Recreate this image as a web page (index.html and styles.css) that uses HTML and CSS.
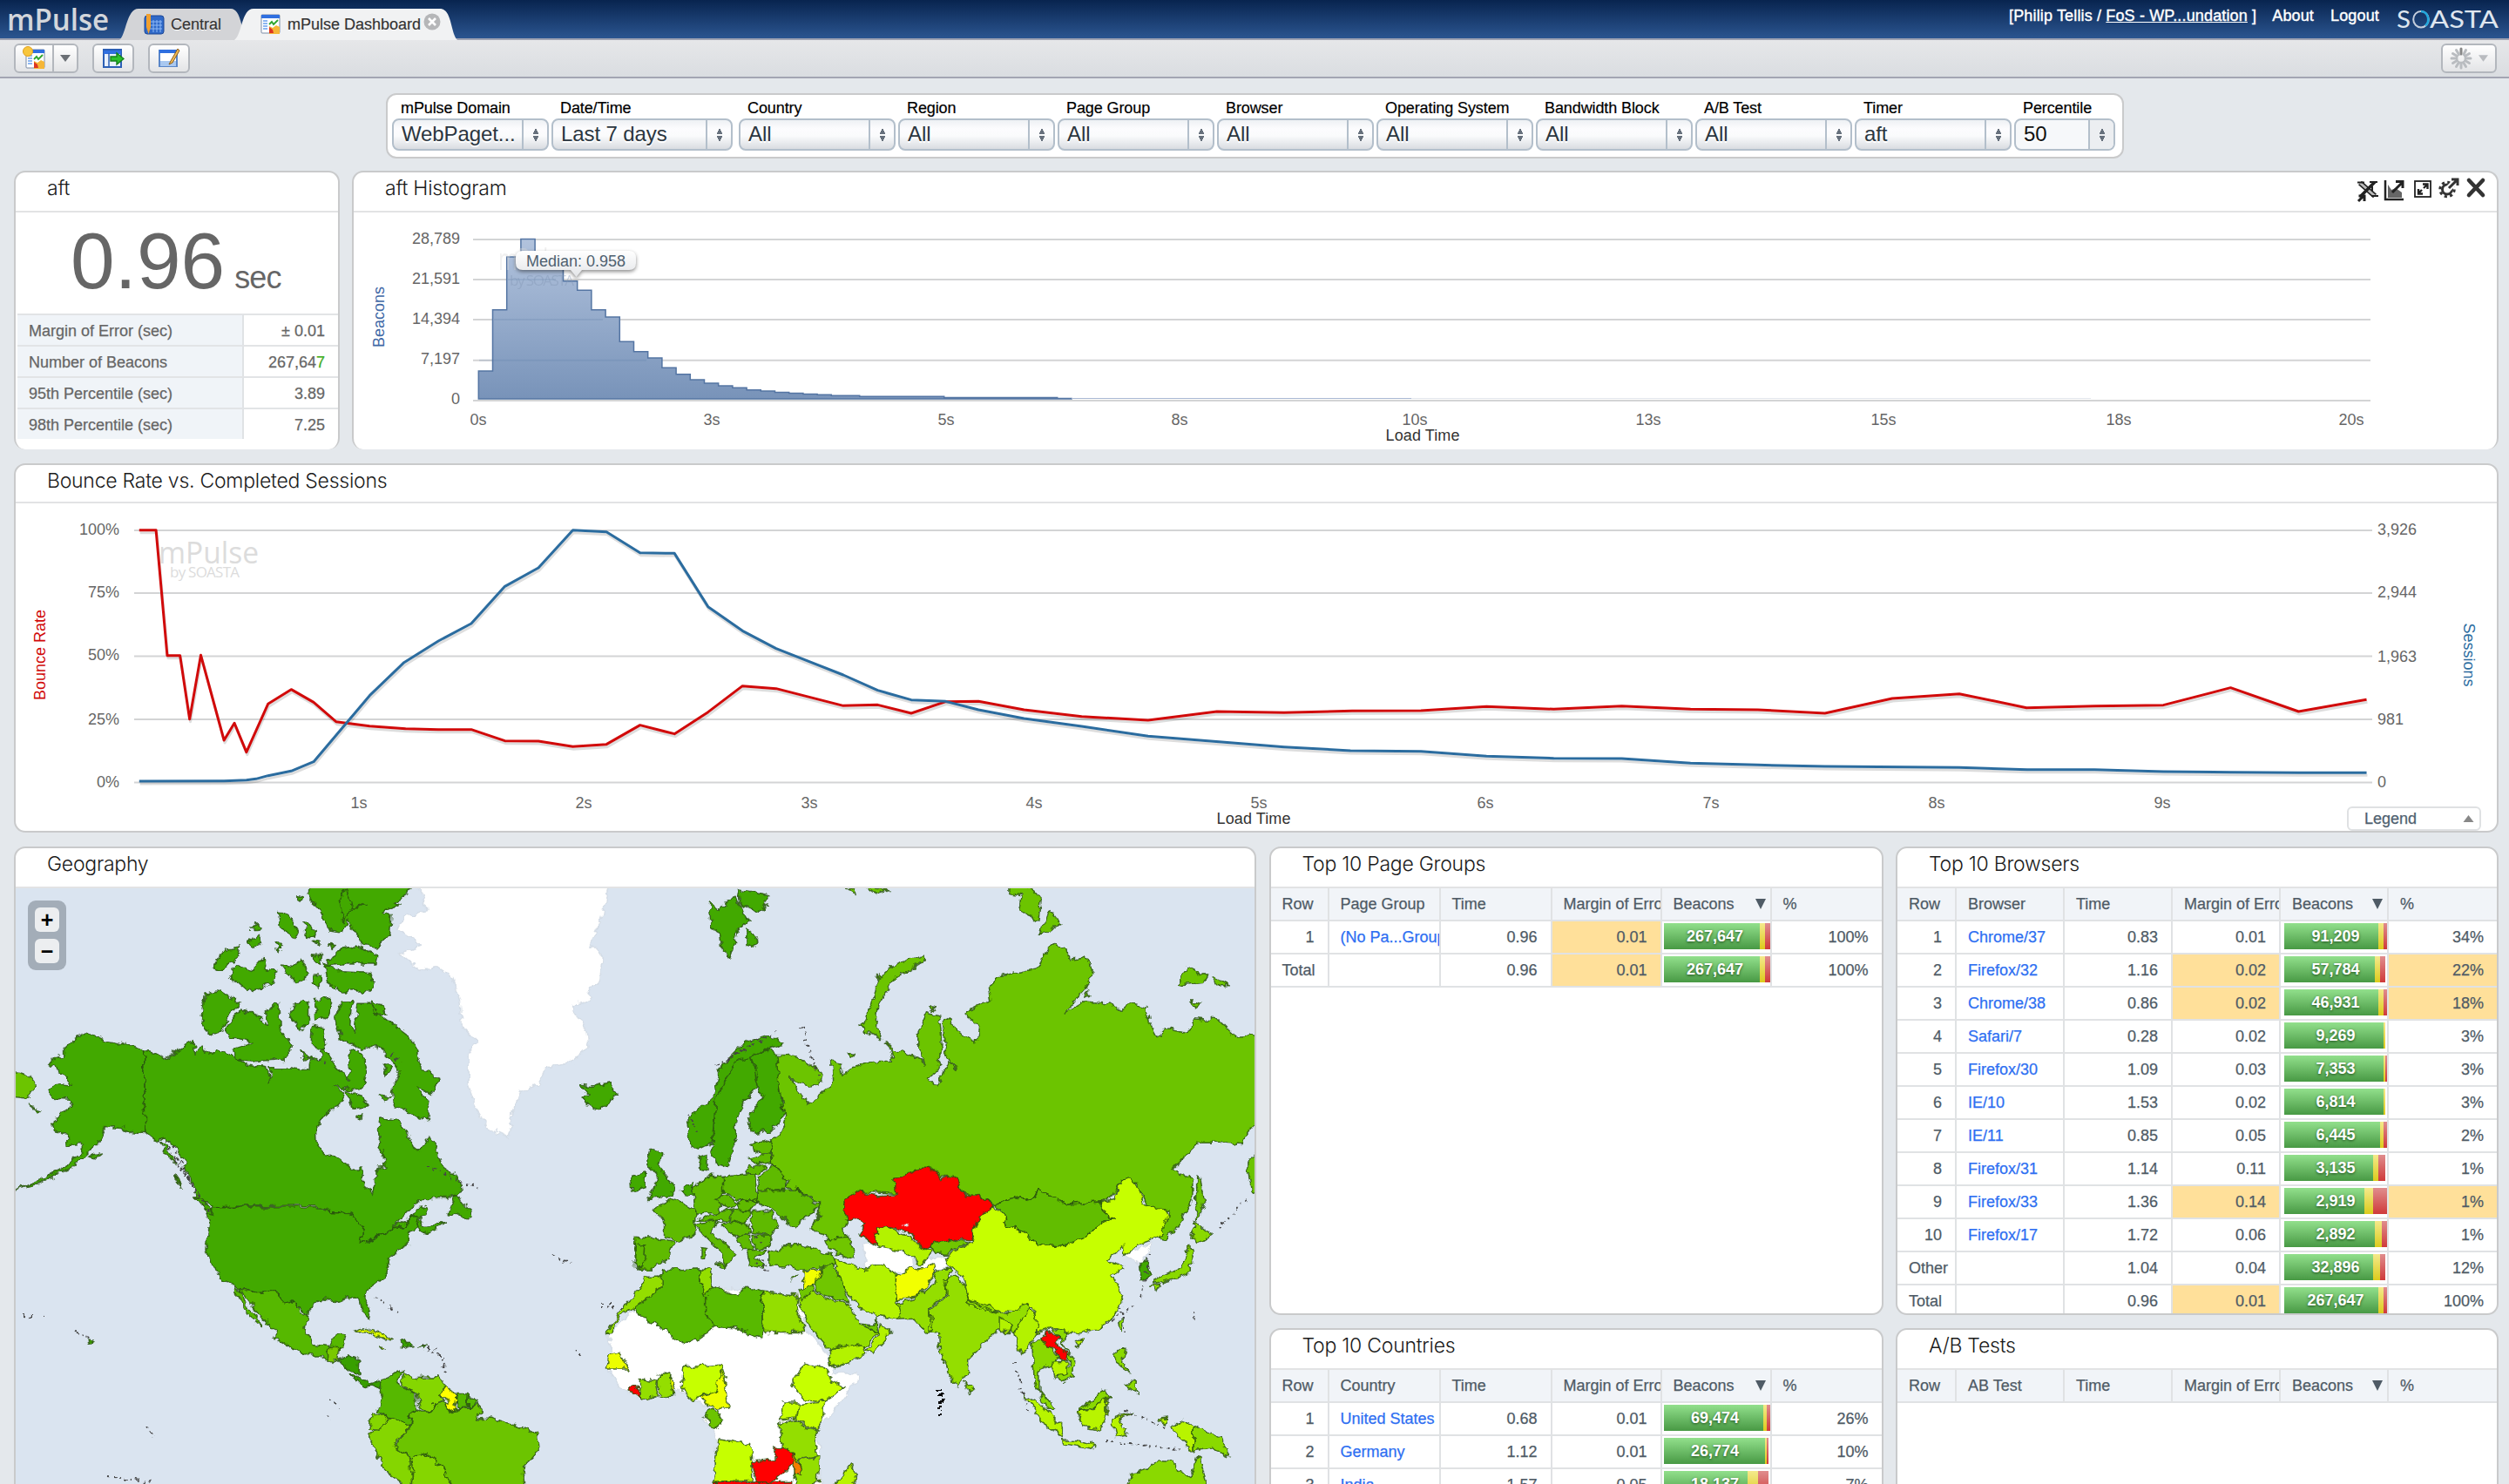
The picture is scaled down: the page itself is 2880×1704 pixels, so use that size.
FILE: index.html
```html
<!DOCTYPE html>
<html lang="en">
<head>
<meta charset="utf-8">
<title>mPulse Dashboard</title>
<link rel="stylesheet" href="styles.css">
</head>
<body>
<header class="topbar">
  <svg class="brand" width="136" height="44" viewBox="0 0 136 44"><text x="8" y="35" textLength="117" lengthAdjust="spacingAndGlyphs">mPulse</text></svg>
  <nav class="tabs">
    <div class="tab tab-central">
      <svg class="tab-shape" width="146" height="36" viewBox="0 0 146 36"><path d="M0 36C8 30 8 0 22 0H128C140 0 140 26 146 36Z" fill="#d3d4d7"/></svg>
      <svg class="tab-icon" width="24" height="26" viewBox="0 0 24 26"><rect x="1" y="3" width="22" height="21" rx="3" fill="#2f69c8" stroke="#1d4795"/><path d="M7 10H21M7 14H21M7 18H21M11 8V22M15 8V22M19 8V22" stroke="#8db8f5"/><path d="M3 1H8V16L5.500 24L3 16Z" fill="#f0a030"/></svg>
      <span class="tab-label">Central</span>
    </div>
    <div class="tab tab-active">
      <svg class="tab-shape" width="256" height="36" viewBox="0 0 256 36"><path d="M0 36C9 30 8 0 22 0H236C250 0 248 28 256 36Z" fill="#f1f2f3"/></svg>
      <svg class="tab-icon" width="24" height="24" viewBox="0 0 24 24"><use href="#dash"/></svg>
      <span class="tab-label">mPulse Dashboard</span>
      <svg class="tab-close" width="20" height="20" viewBox="0 0 20 20"><circle cx="10" cy="10" r="9.500" fill="#b5b6b8"/><path d="M6 6L14 14M14 6L6 14" stroke="#fff" stroke-width="2.600"/></svg>
    </div>
  </nav>
  <div class="account">
    <span class="who">[Philip Tellis / <u>FoS - WP...undation</u> ]</span>
    <span class="about">About</span>
    <span class="logout">Logout</span>
    <svg width="120" height="44" viewBox="0 0 120 44" class="soasta"><text x="1" y="32" textLength="16" lengthAdjust="spacingAndGlyphs">S</text><text x="39" y="32" textLength="79" lengthAdjust="spacingAndGlyphs">ASTA</text><ellipse cx="29" cy="22.200" rx="8.800" ry="9.300" fill="none" stroke="#c4cedd" stroke-width="2"/><path d="M29 13A8.800 9.300 0 0 1 34 29.500" fill="none" stroke="#22a7dc" stroke-width="2.600"/></svg>
  </div>
</header>
<svg class="defs" width="0" height="0"><defs>
  <g id="dash"><rect x="1" y="1" width="21" height="21" rx="1" fill="#fff" stroke="#7a8ba5"/><rect x="1" y="1" width="21" height="4" fill="#2f6fe0"/><path d="M3 8H8M3 11H8M3 14H8M3 17H8" stroke="#68a0ee" stroke-width="1.600"/><path d="M10 12L13 9L15 12L20 7" fill="none" stroke="#2da52d" stroke-width="1.800"/><path d="M10 14L14 16L18 13L22 15V23H10Z" fill="#f5b637"/><path d="M10 15L14 18L15 22H10Z" fill="#dd3522"/></g>
</defs></svg>
<div class="toolbar">
  <div class="btn btn-split"><span class="half"><svg width="30" height="28" viewBox="0 0 30 28"><use href="#dash" x="5" y="4"/><circle cx="8" cy="7" r="5.500" fill="#f8c63c" stroke="#dfa020"/></svg></span><span class="drop"><svg width="12" height="8" viewBox="0 0 12 8"><path d="M0 0H12L6 8Z" fill="#6b6f75"/></svg></span></div>
  <div class="btn"><svg width="26" height="24" viewBox="0 0 26 24"><rect x="2" y="2" width="20" height="20" fill="#e9f1fd" stroke="#2c5fb5" stroke-width="2"/><path d="M2 5H22" stroke="#2f6fe0" stroke-width="4"/><path d="M8 6V22" stroke="#2c5fb5" stroke-width="1.500"/><path d="M10 10H17V6L25 12.500L17 19V15H10Z" fill="#2cc02c" stroke="#15801a" stroke-width="1.400"/></svg></div>
  <div class="btn"><svg width="26" height="24" viewBox="0 0 26 24"><rect x="2" y="3" width="20" height="18" fill="#fff" stroke="#5a86c8" stroke-width="2"/><rect x="2" y="2" width="20" height="4" fill="#2f6fe0"/><rect x="3" y="15" width="18" height="6" fill="#a9c8f0"/><path d="M23 1L15 15L13 19L17 17L25 3Z" fill="#f2bb55" stroke="#8a5c1c"/></svg></div>
  <div class="btn btn-gear"><svg width="26" height="26" viewBox="0 0 26 26" stroke="#b9bcc0" stroke-width="3" stroke-linecap="round"><path d="M13 2V8" stroke="#888"/><path d="M18.500 3.500L16 8.500M22.500 7.500L17.500 10.500M24 13H18M22.500 18.500L17.500 15.500M18.500 22.500L15.500 17.500M13 24V18M7.500 22.500L10.500 17.500M3.500 18.500L8.500 15.500M2 13H8M3.500 7.500L8.500 10.500M7.500 3.500L10.500 8.500"/></svg><svg width="11" height="8" viewBox="0 0 12 8"><path d="M0 0H12L6 8Z" fill="#b9bbbf"/></svg></div>
</div>
<main>
  <section class="filters">
    <div class="filter"><label>mPulse Domain</label><div class="select"><span>WebPaget...</span><i></i></div></div>
    <div class="filter"><label>Date/Time</label><div class="select select-date"><span>Last 7 days</span><i></i></div></div>
    <div class="filter"><label>Country</label><div class="select"><span>All</span><i></i></div></div>
    <div class="filter"><label>Region</label><div class="select"><span>All</span><i></i></div></div>
    <div class="filter"><label>Page Group</label><div class="select"><span>All</span><i></i></div></div>
    <div class="filter"><label>Browser</label><div class="select"><span>All</span><i></i></div></div>
    <div class="filter"><label>Operating System</label><div class="select"><span>All</span><i></i></div></div>
    <div class="filter"><label>Bandwidth Block</label><div class="select"><span>All</span><i></i></div></div>
    <div class="filter"><label>A/B Test</label><div class="select"><span>All</span><i></i></div></div>
    <div class="filter"><label>Timer</label><div class="select"><span>aft</span><i></i></div></div>
    <div class="filter"><label>Percentile</label><div class="select select-input"><span>50</span><i></i></div></div>
  </section>

  <div class="row-top">
    <section class="panel open-end">
      <h2>aft</h2>
      <div class="big"><b>0.96</b><span>sec</span></div>
      <dl class="stats">
        <dt>Margin of Error (sec)</dt><dd>± 0.01</dd>
        <dt>Number of Beacons</dt><dd>267,64<em>7</em></dd>
        <dt>95th Percentile (sec)</dt><dd>3.89</dd>
        <dt>98th Percentile (sec)</dt><dd>7.25</dd>
      </dl>
    </section>
    <section class="panel open-end">
      <h2 class="with-tools"><span>aft Histogram</span>
        <svg width="150" height="32" viewBox="2705 202 150 32" fill="none" stroke="#222">
          <path d="M2709 210L2726 225" stroke-width="6"/><path d="M2709 210L2726 225" stroke="#bbb" stroke-width="3"/><path d="M2726 209L2710 225" stroke-width="3.500"/><path d="M2706 209.500H2714M2720 209H2729M2723 214V220M2722 225H2730" stroke-width="2"/><path d="M2707 231L2712 226M2707.500 225H2714V231" stroke-width="3"/>
          <path d="M2738 207V229H2759" stroke-width="2.500"/><path d="M2741 227V212L2745 218L2750 216L2757 221V227Z" fill="#666" stroke="none"/><path d="M2746 221L2757 210M2750 208.500H2758V216" stroke-width="3"/>
          <rect x="2772" y="208" width="18" height="18" stroke-width="1.800"/><path d="M2776 222L2780 218M2776 217V222.500H2781M2786 212L2782 216M2781 211.500H2786.500V217" stroke-width="2.400"/>
          <circle cx="2809" cy="217.500" r="5.500" stroke="#333" stroke-width="3"/><circle cx="2809" cy="217.500" r="8.200" stroke="#333" stroke-width="3" stroke-dasharray="3.200 3.240"/><path d="M2810 217L2820 207" stroke="#fff" stroke-width="7"/><path d="M2811 216L2820 207M2814 206H2821V213" stroke="#333" stroke-width="3"/>
          <path d="M2834 207L2850 224M2850 207L2834 224" stroke="#333" stroke-width="4.600" stroke-linecap="round"/>
        </svg>
      </h2>
      <svg class="chart" viewBox="406 244 2460 272" width="2460" height="272">
        <defs><linearGradient id="hg" x1="0" y1="274" x2="0" y2="458" gradientUnits="userSpaceOnUse"><stop offset="0" stop-color="#b2c3dd"/><stop offset="1" stop-color="#7893b9"/></linearGradient>
        <linearGradient id="tg" x1="0" y1="0" x2="0" y2="1"><stop offset="0" stop-color="#fff"/><stop offset="1" stop-color="#e3e5e8"/></linearGradient></defs>
        <path class="grid" d="M543 275H2721M543 321H2721M543 367H2721M543 413.700H2721M543 460H2721"/>
        <path fill="url(#hg)" stroke="#5475a3" stroke-width="1.500" d="M549.300 458V426h16.200V355.700h16.200V295h16.200V274.500h16.200V289h16.200V305h16.200V322.700h16.200V333.300h16.200V355.700h16.200V364h16.200V392.300h16.200V403.700h16.200V411h16.200V422.300h16.200V429.700h16.200V436h16.200V440h16.200V443h16.200V445.300h16.200V447.700h16.200V449h16.200V450.600h16.200V451.600h16.200V452.600h16.200V453.300h16.200V454.300h32.400V455.300h97V456.400h130V457.400H1230V458Z"/>
        <path d="M1230 457.500H1620" stroke="#a9b8d3" stroke-width="1"/><path d="M1620 457.500H2400" stroke="#e3e6ec" stroke-width="1"/>
        <path d="M550 413.700H742M567 367H692M583 321H638" stroke="#55759f" stroke-opacity=".18" stroke-width="2"/>
        <g class="mark"><text x="572" y="310" font-size="34" textLength="82" lengthAdjust="spacingAndGlyphs" opacity=".4">mPulse</text><text x="585" y="328" font-size="17" textLength="74" fill="#8195b3" opacity=".4">by SOASTA</text></g>
        <g class="tip"><path d="M600 288H722Q730 288 730 296V302Q730 310 722 310H668L661.500 318L655 310H600Q592 310 592 302V296Q592 288 600 288Z" fill="url(#tg)"/></g><text class="tip-text" x="604" y="306" textLength="114">Median: 0.958</text>
        <g class="axis end"><text x="528" y="280">28,789</text><text x="528" y="326">21,591</text><text x="528" y="372">14,394</text><text x="528" y="418">7,197</text><text x="528" y="464">0</text></g>
        <g class="axis mid"><text x="549" y="488">0s</text><text x="817" y="488">3s</text><text x="1086" y="488">5s</text><text x="1354" y="488">8s</text><text x="1624" y="488">10s</text><text x="1892" y="488">13s</text><text x="2162" y="488">15s</text><text x="2432" y="488">18s</text><text x="2699" y="488">20s</text><text class="dark" x="1633" y="506" textLength="85">Load Time</text>
        <text class="blue" transform="translate(441 364) rotate(-90)">Beacons</text></g>
      </svg>
    </section>
  </div>

  <section class="panel bounce">
    <h2>Bounce Rate vs. Completed Sessions</h2>
    <svg class="chart" viewBox="18 578 2848 376" width="2848" height="376">
      <path class="grid" d="M154 609H2723M154 681H2723M154 753.500H2723M154 826H2723M154 898.500H2723"/>
      <g class="mark"><text x="182" y="647" font-size="34" textLength="115" lengthAdjust="spacingAndGlyphs">mPulse</text><text x="195" y="663" font-size="17" textLength="80">by SOASTA</text></g>
      <defs>
        <polyline id="sess" points="174,1011 280,1010 308,1007 320,1003 335,992 364,976 392,944 462,716 505,602 548,528 589,468 631,340 673,276 716,146 758,152 800,224 843,226 885,410 928,493 970,554 1054,645 1097,698 1139,731 1182,736 1223,765 1280,795 1352,822 1435,856 1568,885 1605,893 1688,906 1776,908 1858,925 1942,932 2027,933 2113,949 2197,955 2281,960 2449,964 2534,971 2618,971 2704,978 2788,980 2873,982 2958,982"/>
        <polyline id="rate" points="174,146 195,146 209,578 225,578 237,797 251,577 280,870 293,811 308,911 335,745 364,695 392,739 420,806 462,821 507,830 548,833 589,833 631,872 673,873 716,892 758,884 800,818 843,848 885,773 928,683 970,692 1054,751 1097,748 1139,777 1182,737 1223,736 1280,765 1352,788 1435,801 1521,771 1605,775 1690,769 1776,768 1858,754 1942,763 2027,752 2113,763 2197,765 2281,777 2365,726 2449,710 2533,758 2618,752 2704,749 2788,689 2873,771 2958,730"/>
      </defs>
      <g class="lines" transform="translate(0 560) scale(.91837 .33333)">
        <g class="shade"><use href="#rate" x="1" y="9"/><use href="#sess" x="1" y="9"/></g>
        <use href="#rate" stroke="#d10a0a"/><use href="#sess" stroke="#2b6c9f"/>
      </g>
      <g class="axis end"><text x="137" y="614">100%</text><text x="137" y="686">75%</text><text x="137" y="758">50%</text><text x="137" y="832">25%</text><text x="137" y="904">0%</text></g>
      <g class="axis"><text x="2729" y="614">3,926</text><text x="2729" y="686">2,944</text><text x="2729" y="760">1,963</text><text x="2729" y="832">981</text><text x="2729" y="904">0</text></g>
      <g class="axis mid"><text x="412" y="928">1s</text><text x="670" y="928">2s</text><text x="929" y="928">3s</text><text x="1187" y="928">4s</text><text x="1445" y="928">5s</text><text x="1705" y="928">6s</text><text x="1964" y="928">7s</text><text x="2223" y="928">8s</text><text x="2482" y="928">9s</text><text class="dark" x="1439" y="946" textLength="85">Load Time</text>
      <text class="red" transform="translate(52 752) rotate(-90)" textLength="104">Bounce Rate</text><text class="blue2" transform="translate(2828 752) rotate(90)">Sessions</text></g>
    </svg>
    <div class="legend">Legend<svg width="13" height="8" viewBox="0 0 12 8"><path d="M0 8H12L6 0Z" fill="#888"/></svg></div>
  </section>

  <div class="row-grid">
    <section class="panel geo cut">
      <h2>Geography</h2>
      <div class="mapwrap">
      <svg class="map" viewBox="18 1020 1422 684" width="1422" height="684">
        <defs><filter id="coast" x="0" y="0" width="1" height="1" filterUnits="objectBoundingBox"><feTurbulence type="fractalNoise" baseFrequency=".1" numOctaves="3" seed="4"/><feDisplacementMap in="SourceGraphic" scale="10" xChannelSelector="R" yChannelSelector="G"/></filter></defs>
        <g filter="url(#coast)">
        <rect x="-40" y="980" width="1540" height="780" fill="#dae4f0"/>
        <g transform="translate(0 960) scale(.45918 .4745)" class="land c1">
          <path class="w" d="M1030 100L1525 100 1505 200 1475 260 1505 290 1500 350 1470 380 1475 400 1425 410 1445 440 1465 470 1470 510 1430 545 1370 560 1345 600 1300 620 1280 680 1270 730 1225 710 1195 670 1170 600 1170 530 1190 500 1155 460 1150 400 1130 340 1090 315 1050 325 1000 285 1055 265 995 225 1010 195 1065 180 1060 150Z"/>
          <path d="M219 472L240 485 260 494 340 510 361 518 363 720 330 718 300 705 265 703 255 725 240 745 210 775 185 800 140 818 100 840 40 855 110 828 170 795 205 765 213 745 170 747 168 725 140 712 131 693 148 672 178 655 175 637 130 635 115 612 150 600 178 603 160 580 125 550 135 537 158 530 158 515 185 490Z"/>
          <path d="M361 518L385 523 410 540 440 525 460 512 415 535 484 498 490 525 508 508 513 527 545 515 580 533 605 545 625 555 665 560 676 595 675 560 720 560 775 565 780 530 800 545 810 515 822 528 838 555 860 580 868 590 880 570 872 540 878 515 905 525 918 560 910 600 890 615 835 605 862 620 855 645 825 665 805 685 792 710 793 745 812 773 840 775 880 805 905 805 908 845 930 865 940 840 938 810 960 798 958 765 945 735 952 680 975 685 1000 690 1020 720 1028 745 1045 760 1075 727 1090 755 1110 805 1150 830 1155 860 1115 878 1050 878 1020 910 985 945 1020 930 1050 895 1072 898 1065 920 1045 925 1060 945 1090 940 1112 935 1060 965 1045 945 1040 920 1025 925 1018 945 985 948 940 970 902 988 908 950 880 920 855 908 825 908 785 893 535 897 490 870 485 845 460 800 465 790 430 745 410 730 395 742 363 718Z"/>
          <path d="M535 897L785 897 825 908 855 908 880 920 908 950 902 988 940 970 985 948 1018 945 1025 922 1040 920 1045 945 1020 965 1020 990 990 1005 975 1020 965 1055 965 1068 920 1100 912 1115 927 1150 925 1168 905 1150 898 1120 870 1115 845 1125 800 1120 772 1145 770 1160 745 1140 733 1122 715 1130 687 1103 635 1106 605 1093 580 1090 550 1070 540 1045 522 1020 516 1000 524 935 516 905Z"/>
          <path fill="#56b800" d="M600 1093L635 1106 687 1103 715 1130 733 1122 752 1155 770 1160 764 1200 785 1232 825 1236 838 1208 865 1206 858 1235 850 1240 830 1245 818 1270 800 1258 770 1258 690 1218 692 1200 640 1150 625 1125 605 1105ZM585 1093L603 1097 615 1135 640 1160 656 1190 625 1165 610 1140Z"/>
          <path fill="#7ac900" d="M818 1248L825 1238 850 1238 845 1262 832 1280 818 1270Z"/>
          <path fill="#389f00" d="M845 1265L870 1257 897 1268 895 1302 868 1290ZM875 1302L895 1308 925 1325 950 1318 948 1335 930 1328 910 1332ZM1003 1220L1035 1232 1005 1242ZM1045 1234L1065 1236 1060 1240Z"/>
          <path fill="#e0ff00" d="M885 1200L905 1190 940 1200 985 1217 960 1218 930 1202ZM948 1235L965 1238 955 1242Z"/>
          <path fill="#56b800" d="M950 1325L985 1300 1010 1292 992 1315 1000 1335 1040 1350 1043 1390 1028 1395 1022 1427 995 1418 970 1405 942 1393 955 1360Z"/>
          <path fill="#85d600" d="M1010 1300L1040 1310 1095 1308 1115 1332 1102 1350 1110 1365 1085 1375 1075 1395 1050 1390 1043 1350 1015 1340 1003 1330ZM970 1405L1022 1427 1020 1440 985 1470 1025 1505 1035 1530 1025 1580 965 1535 918 1450 945 1440ZM930 1395L970 1405 945 1440 925 1438ZM1025 1505L1065 1495 1110 1530 1135 1580 1030 1580Z"/>
          <path fill="#ff0" d="M1115 1330L1130 1340 1140 1360 1135 1375 1142 1388 1125 1393 1115 1380 1122 1365 1102 1350Z"/>
          <path fill="#56b800" d="M1140 1350L1170 1350 1170 1382 1148 1385 1138 1368ZM1170 1352L1190 1365 1180 1385 1168 1382Z"/>
          <path fill="#6cc400" d="M1028 1395L1043 1390 1050 1395 1075 1395 1085 1375 1115 1368 1125 1393 1148 1385 1180 1385 1192 1370 1205 1395 1190 1412 1225 1410 1260 1420 1310 1432 1345 1455 1348 1480 1310 1520 1310 1590 1135 1590 1110 1530 1065 1495 1030 1505 985 1475 1022 1440Z"/>
          <path fill="#6cc400" d="M20 570L75 585 92 605 70 635 20 630Z"/>
          <path d="M778 100L1050 100 1010 145 985 160 1000 165 955 185 978 190 975 235 940 270 905 265 890 235 870 205 855 235 825 230 800 180 775 160ZM865 130L880 175 915 165 870 185 858 210 850 160Z"/>
          <path d="M565 465L600 420 640 430 670 460 665 425 697 405 700 470 730 510 715 540 640 545 590 540 585 515 635 500 580 490ZM512 383L545 375 600 405 575 430 555 470 525 480 503 453ZM787 395L830 393 820 430 790 450ZM722 430L750 397 770 400 770 455 750 470ZM780 460L810 465 815 515 795 520 778 500ZM755 520L778 535 765 545Z"/>
          <path d="M840 440L855 402 880 402 875 450 885 475 895 405 925 405 960 440 1015 480 1040 510 1050 560 1098 590 1080 625 1045 605 1075 655 1070 690 1030 675 985 650 980 605 1000 570 980 540 940 505 900 515 850 490ZM925 403L955 408 965 428 935 430Z"/>
          <path d="M835 290L855 270 890 265 945 290 940 310 850 310 815 315ZM810 305L840 325 925 330 935 355 925 375 850 375 820 355ZM575 340L590 315 635 325 660 292 665 320 690 330 680 355 620 378ZM530 320L560 275 600 270 590 300 550 325ZM700 310L730 315 750 300 768 320 765 350 740 355 720 335ZM622 228L640 210 655 225ZM620 255L650 238 650 260 630 270ZM695 182L720 190 748 235 740 248 700 220ZM760 205L790 230 785 245 765 240ZM742 143L756 145 752 158 742 155ZM775 288L805 290 800 310ZM785 335L800 335 800 365 778 355ZM688 255L702 265 695 278ZM780 253L802 255 800 264ZM825 260L838 265 830 273Z"/>
          <path d="M865 615L905 628 920 655 880 660ZM947 625L980 630 960 640ZM955 555L980 560 965 578ZM890 680L908 672 905 685ZM1140 865L1150 885 1180 905 1180 925 1122 912ZM487 872L505 875 535 915 520 912ZM435 820L445 825 453 850ZM400 745L415 750 440 790 425 780ZM220 775L258 765 240 780ZM222 1220L235 1223 225 1230ZM75 653L103 662 98 668Z"/>
          <path d="M1455 630L1475 628 1450 605 1480 608 1525 597 1545 625 1500 660 1465 650Z"/>
        </g>
        <g transform="translate(720 960) scale(.47194 .4745)" class="land c2">
          <path class="w" d="M-50 1210L-35 1240 -50 1290 -20 1330 30 1365 70 1358 125 1340 165 1365 205 1385 185 1410 215 1450 215 1600 470 1600 470 1480 460 1440 520 1370 560 1310 560 1297 500 1300 485 1250 430 1190 430 1110 330 1105 200 1090 100 1048 20 1140ZM575 985L610 990 640 980 700 1035 690 1050 655 1060 620 1040 580 1045ZM720 1020L775 1015 785 1045 750 1050 715 1045ZM1205 1010L1278 985 1255 1035 1230 1025Z"/>
          <path d="M360 530L390 530 430 540 475 575 470 600 445 605 395 585 415 615 440 650 465 630 500 600 495 545 520 550 525 580 545 560 600 545 645 545 640 515 690 530 725 550 705 510 705 480 730 425 760 435 765 500 760 560 730 590 755 600 780 545 800 565 775 530 770 450 785 440 800 475 850 500 855 460 820 430 885 395 880 370 900 340 1000 320 1015 280 1040 258 1070 275 1075 300 1115 295 1130 320 1125 355 1060 430 1110 400 1170 405 1200 425 1225 405 1265 415 1270 450 1290 488 1310 465 1365 475 1380 440 1440 445 1480 485 1570 480 1570 660 1530 695 1490 745 1430 740 1390 740 1325 808 1375 830 1375 880 1350 930 1310 975 1288 970 1285 940 1315 925 1318 908 1270 905 1240 840 1200 835 1185 870 1155 885 1070 890 1000 855 985 885 940 870 895 893 865 880 825 865 795 825 745 825 740 803 680 825 655 830 655 865 565 860 525 890 530 910 540 925 525 950 535 975 500 975 445 950 465 925 465 885 410 855 385 850 390 835 355 795 350 735 375 715 385 680 370 600Z"/>
          <path fill="#f00" d="M525 885L560 858 605 870 655 868 650 830 690 815 720 803 745 805 765 830 795 822 825 870 850 868 888 893 870 922 850 930 835 980 780 975 720 1000 690 960 630 945 607 965 607 992 565 965 580 935 550 925 535 930 525 905Z"/>
          <path class="w" d="M670 937L682 935 675 943Z"/>
          <path fill="#c6ff00" d="M888 895L920 920 925 945 965 955 990 985 1050 992 1110 975 1130 950 1185 925 1155 905 1155 885 1185 880 1200 838 1225 832 1245 850 1255 890 1310 905 1315 925 1295 970 1240 990 1205 1015 1205 990 1170 1025 1205 1045 1180 1065 1205 1110 1195 1150 1150 1190 1100 1205 1075 1200 1040 1190 995 1200 990 1140 935 1150 880 1145 830 1120 815 1060 775 1040 770 1020 835 985 850 930ZM1090 1222L1105 1220 1098 1235Z"/>
          <path fill="#62bd00" d="M895 893L940 870 985 885 1000 855 1070 890 1155 885 1155 905 1185 925 1130 950 1110 975 1050 992 990 985 965 955 925 945 920 920Z"/>
          <path fill="#94de00" d="M735 1150L780 1110 770 1075 800 1060 820 1090 830 1120 885 1150 905 1150 930 1155 975 1130 985 1150 955 1180 940 1200 905 1195 890 1205 830 1265 830 1300 805 1330 790 1320 762 1250 760 1205 735 1200ZM655 1130L700 1120 745 1080 755 1050 790 1050 775 1080 780 1105 735 1145 745 1190 730 1205 700 1168 660 1170ZM822 1320L840 1335 832 1350ZM830 1118L885 1140 900 1155 870 1150 830 1130ZM415 1125L430 1105 450 1100 500 1125 540 1135 565 1185 610 1200 575 1240 510 1248 490 1240 440 1180Z"/>
          <path fill="#f2ff00" d="M650 1070L690 1045 720 1045 745 1035 750 1060 730 1085 705 1115 655 1120ZM428 1050L475 1050 470 1075 430 1095Z"/>
          <path fill="#b3f200" d="M503 1020L535 1035 565 1050 620 1038 650 1055 655 1120 665 1168 610 1160 565 1140 540 1110 520 1080ZM607 950L630 945 690 970 720 1000 745 1000 715 1038 660 1000 607 992ZM490 1243L575 1232 580 1255 495 1288ZM615 1180L640 1200 600 1250 580 1245 608 1210ZM940 1200L980 1140 1000 1180 985 1225 955 1258ZM905 1165L935 1180 930 1200 905 1200Z"/>
          <path fill="#70c600" d="M455 1090L475 1045 500 1040 520 1070 540 1130 500 1120 455 1098ZM345 1010L380 990 430 990 500 1015 505 1040 425 1048 345 1040ZM735 990L780 975 830 985 780 1010 750 1010ZM480 975L535 970 555 1015 530 1020 490 1000ZM395 1067L410 1065 400 1072ZM415 1100L450 1085 450 1100 425 1125ZM565 1180L600 1185 610 1165 608 1200Z"/>
          <path fill="#8ad900" d="M985 1230L1010 1215 1050 1260 1030 1280 1000 1290 1000 1340 1040 1385 1020 1385 990 1320ZM1030 1195L1070 1195 1060 1225 1090 1275 1085 1305 1060 1320 1045 1300 1075 1290 1075 1255 1055 1220ZM1095 1390L1160 1340 1172 1360 1130 1385ZM1190 1245L1210 1235 1205 1275 1225 1300 1185 1275ZM1210 1325L1240 1320 1240 1350ZM1190 1180L1205 1172 1198 1200ZM1380 935L1418 965 1385 985 1375 970ZM1370 990L1378 1020 1365 1060 1330 1070 1280 1085 1285 1072 1345 1045ZM1275 1090L1295 1085 1285 1105ZM1377 1425L1440 1455 1465 1500 1420 1480 1377 1485ZM1205 1600L1230 1540 1270 1530 1290 1510 1330 1512 1335 1535 1370 1555 1388 1500 1400 1530 1420 1600Z"/>
          <path fill="#f00" d="M1008 1212L1020 1198 1050 1215 1045 1225 1075 1260 1070 1273 1055 1270 1040 1238 1020 1235Z"/>
          <path fill="#b8f400" d="M1030 1275L1070 1273 1070 1300 1040 1308ZM965 1352L1000 1370 1058 1430 1058 1455 1020 1430ZM1058 1460L1100 1462 1140 1475 1130 1482 1060 1470ZM1090 1390L1130 1388 1165 1360 1165 1400 1150 1435 1110 1430ZM1180 1410L1235 1395 1195 1412 1215 1450 1190 1455ZM1320 1430L1350 1415 1377 1425 1377 1490 1340 1450ZM1290 1412L1315 1410 1310 1425ZM500 1575L520 1550 545 1515 555 1550 545 1600 500 1600Z"/>
          <path d="M1385 820L1395 830 1402 890 1385 935ZM1540 750L1508 800 1520 865 1540 860ZM720 288L725 300 650 345 610 410 605 465 620 490 580 475 570 455 600 390 610 340 640 315ZM930 110L985 128 1005 150 1000 205 955 180 960 145 930 140ZM1030 180L1055 215 1005 240ZM1345 335L1360 315 1410 340 1400 355 1345 360ZM1425 340L1465 360 1430 360ZM1370 400L1395 405 1380 415ZM530 130L550 125 560 140ZM580 125L640 130 600 140ZM538 525L552 530 545 540ZM628 500L645 508 640 515ZM735 410L747 412 740 422ZM1115 378L1125 383 1112 388Z"/>
          <g class="c1"><path d="M200 160L225 180 245 155 265 150 295 205 270 230 250 295 230 270 225 235 203 220ZM270 130L345 145 330 185 275 165ZM290 225L320 245 310 270 290 262Z"/>
          <path d="M155 750L145 690 210 630 225 560 285 500 340 483 380 500 340 520 300 535 265 545 235 600 215 640 210 740 175 758ZM265 545L300 535 315 570 315 610 290 640 265 680 262 740 245 795 220 800 205 760 215 640 235 600ZM300 535L350 512 365 540 375 640 385 670 350 715 305 720 293 680 330 630 315 600Z"/>
          <path d="M55 755L85 770 75 800 100 830 115 855 100 875 50 880 75 830 50 790ZM10 825L45 815 45 850 12 860ZM175 775L195 770 195 810 175 805ZM130 860L160 835 165 870 140 875ZM1245 1035L1265 1030 1272 1060 1248 1075Z"/></g>
          <g class="c3"><path d="M300 745L355 735 350 765 320 770ZM295 780L350 765 355 790 320 795ZM295 795L340 800 320 820 290 812Z"/><path d="M320 830L355 795 385 830 385 860 320 858ZM305 885L320 860 410 855 465 890 455 915 420 930 410 950 370 920 350 900ZM232 825L310 815 318 885 270 880 232 865ZM160 850L200 822 232 825 232 870 225 910 165 915ZM62 905L115 875 165 905 165 960 130 980 90 970 90 930ZM18 970L115 980 100 1020 60 1050 35 1050 20 1045ZM22 985L42 990 38 1045 20 1045ZM165 940L215 930 205 960 265 1010 255 1020 240 1040 230 1010 185 965ZM212 1035L240 1035 238 1045ZM178 998L190 1000 188 1020 178 1018Z"/><path d="M215 880L240 872 275 890 240 898ZM225 910L255 900 250 930 170 930 200 918ZM255 905L300 905 290 930 250 935ZM275 880L315 885 300 908 265 905ZM225 935L290 930 300 960 275 970 240 950ZM300 910L350 905 365 945 350 965 305 960ZM305 965L355 965 350 995 310 995ZM270 970L300 965 305 1000 280 1000ZM290 1000L340 1000 315 1020 335 1050 300 1040Z"/></g>
          <path fill="#58b900" d="M20 1140L90 1050 178 1047 178 1075 190 1110 190 1160 215 1188 160 1225 135 1228 75 1185 20 1150ZM190 1100L205 1090 270 1110 290 1090 328 1105 328 1218 260 1190 215 1188 190 1160Z"/>
          <path fill="#94de00" d="M-50 1205L-20 1150 20 1110 45 1065 85 1065 85 1090 20 1140 -20 1160 -40 1205ZM178 1047L200 1050 205 1090 190 1110 178 1075ZM328 1105L410 1110 415 1150 435 1200 330 1200ZM77 1305L110 1305 110 1350 77 1360ZM28 1310L75 1315 72 1355 30 1362ZM372 1420L405 1412 458 1442 460 1500 410 1510 370 1465ZM405 1555L420 1510 468 1500 465 1560 430 1600Z"/>
          <path fill="#c6ff00" d="M430 1275L480 1285 500 1320 530 1335 480 1370 430 1365 400 1330ZM135 1285L230 1280 240 1310 215 1345 190 1350 160 1365 130 1335ZM415 1375L478 1370 475 1420 460 1440 410 1410ZM380 1370L415 1370 410 1408 372 1412ZM220 1460L300 1470 305 1560 210 1565Z"/>
          <path fill="#ecff00" d="M230 1290L240 1340 245 1385 195 1380 180 1355 215 1345ZM-50 1290L-45 1255 -20 1250 5 1290ZM105 1305L118 1325 110 1350Z"/>
          <path d="M185 1400L215 1385 232 1415 210 1435Z"/>
          <path fill="#f00" d="M2 1340L20 1330 33 1362ZM303 1515L360 1510 360 1480 385 1480 405 1495 405 1520 370 1550 350 1565 315 1565ZM210 1565L400 1562 400 1600 210 1600Z"/>
          <path fill="#f47b00" d="M402 1490L415 1510 425 1550 410 1545Z"/>
        </g>
        <g class="specks"><path d="M26 1510L37 1511M50 1512L52 1514M88 1530L104 1538M635 1442L655 1450M692 1496H705M662 1550L668 1560M690 1500L715 1502M122 1695L175 1702M168 1638L178 1648M430 1490L455 1505M485 1545L510 1560M500 1548L512 1575M1270 1520L1300 1500M1310 1490L1320 1440M1400 1410L1430 1378M1288 1500L1292 1530M1370 1505L1374 1518M1165 1565L1180 1620M1270 1655L1360 1665M1290 1620L1340 1640M868 1450L885 1462M380 1605L390 1620M190 1310L230 1375M195 1310L222 1365M196 1325L240 1390M920 1180L940 1240M345 1212L375 1220M450 1210L460 1220M868 1420L885 1440M872 1440L880 1458M790 1280L800 1300M822 1225L870 1192M828 1220L890 1186M490 1340L550 1365M375 1625L380 1630"/><path d="M1079 1595V1626M1081 1600V1618" stroke="#000" stroke-width="4"/></g>
        </g>
      </svg>
      <div class="zoomer"><button>+</button><button>−</button></div>
      </div>
    </section>

    <section class="panel">
      <h2>Top 10 Page Groups</h2>
      <table class="t-a">
        <colgroup><col class="k1"><col class="k2"><col class="k3"><col class="k4"><col class="k5"><col></colgroup>
        <tr><th>Row</th><th>Page Group</th><th>Time</th><th>Margin of Error</th><th>Beacons <s></s></th><th>%</th></tr>
        <tr><td>1</td><td><a>(No Pa...Group)</a></td><td>0.96</td><td class="hl">0.01</td><td><div class="bar"><i class="g" style="width:110px"></i><i class="y" style="width:6px"></i><i class="r" style="width:6px"></i><b>267,647</b></div></td><td>100%</td></tr>
        <tr><td class="lab">Total</td><td></td><td>0.96</td><td class="hl">0.01</td><td><div class="bar"><i class="g" style="width:110px"></i><i class="y" style="width:6px"></i><i class="r" style="width:6px"></i><b>267,647</b></div></td><td>100%</td></tr>
      </table>
    </section>

    <section class="panel">
      <h2>Top 10 Browsers</h2>
      <table class="t-b">
        <colgroup><col class="k1"><col class="k2"><col class="k3"><col class="k4"><col class="k5"><col></colgroup>
        <tr><th>Row</th><th>Browser</th><th>Time</th><th>Margin of Error</th><th>Beacons <s></s></th><th>%</th></tr>
        <tr><td>1</td><td><a>Chrome/37</a></td><td>0.83</td><td>0.01</td><td><div class="bar"><i class="g" style="width:108px"></i><i class="y" style="width:6px"></i><i class="r" style="width:4px"></i><b>91,209</b></div></td><td>34%</td></tr>
        <tr><td>2</td><td><a>Firefox/32</a></td><td>1.16</td><td class="hl">0.02</td><td><div class="bar"><i class="g" style="width:104px"></i><i class="y" style="width:6px"></i><i class="r" style="width:6px"></i><b>57,784</b></div></td><td class="hl">22%</td></tr>
        <tr><td>3</td><td><a>Chrome/38</a></td><td>0.86</td><td class="hl">0.02</td><td><div class="bar"><i class="g" style="width:108px"></i><i class="y" style="width:6px"></i><i class="r" style="width:4px"></i><b>46,931</b></div></td><td class="hl">18%</td></tr>
        <tr><td>4</td><td><a>Safari/7</a></td><td>0.28</td><td>0.02</td><td><div class="bar"><i class="g" style="width:114px"></i><i class="y" style="width:2px"></i><b>9,269</b></div></td><td>3%</td></tr>
        <tr><td>5</td><td><a>Firefox/30</a></td><td>1.09</td><td>0.03</td><td><div class="bar"><i class="g" style="width:114px"></i><i class="y" style="width:2px"></i><i class="r" style="width:2px"></i><b>7,353</b></div></td><td>3%</td></tr>
        <tr><td>6</td><td><a>IE/10</a></td><td>1.53</td><td>0.02</td><td><div class="bar"><i class="g" style="width:114px"></i><i class="y" style="width:2px"></i><b>6,814</b></div></td><td>3%</td></tr>
        <tr><td>7</td><td><a>IE/11</a></td><td>0.85</td><td>0.05</td><td><div class="bar"><i class="g" style="width:110px"></i><i class="y" style="width:4px"></i><i class="r" style="width:4px"></i><b>6,445</b></div></td><td>2%</td></tr>
        <tr><td>8</td><td><a>Firefox/31</a></td><td>1.14</td><td>0.11</td><td><div class="bar"><i class="g" style="width:102px"></i><i class="y" style="width:6px"></i><i class="r" style="width:8px"></i><b>3,135</b></div></td><td>1%</td></tr>
        <tr><td>9</td><td><a>Firefox/33</a></td><td>1.36</td><td class="hl">0.14</td><td><div class="bar"><i class="g" style="width:92px"></i><i class="y" style="width:10px"></i><i class="r" style="width:16px"></i><b>2,919</b></div></td><td class="hl">1%</td></tr>
        <tr><td>10</td><td><a>Firefox/17</a></td><td>1.72</td><td>0.06</td><td><div class="bar"><i class="g" style="width:104px"></i><i class="y" style="width:8px"></i><i class="r" style="width:6px"></i><b>2,892</b></div></td><td>1%</td></tr>
        <tr><td class="lab">Other</td><td></td><td>1.04</td><td>0.04</td><td><div class="bar"><i class="g" style="width:102px"></i><i class="y" style="width:8px"></i><i class="r" style="width:6px"></i><b>32,896</b></div></td><td>12%</td></tr>
        <tr><td class="lab">Total</td><td></td><td>0.96</td><td class="hl">0.01</td><td><div class="bar"><i class="g" style="width:108px"></i><i class="y" style="width:6px"></i><i class="r" style="width:4px"></i><b>267,647</b></div></td><td>100%</td></tr>
      </table>
    </section>

    <section class="panel cut">
      <h2>Top 10 Countries</h2>
      <table class="t-a">
        <colgroup><col class="k1"><col class="k2"><col class="k3"><col class="k4"><col class="k5"><col></colgroup>
        <tr><th>Row</th><th>Country</th><th>Time</th><th>Margin of Error</th><th>Beacons <s></s></th><th>%</th></tr>
        <tr><td>1</td><td><a>United States</a></td><td>0.68</td><td>0.01</td><td><div class="bar"><i class="g" style="width:114px"></i><i class="y" style="width:4px"></i><i class="r" style="width:4px"></i><b>69,474</b></div></td><td>26%</td></tr>
        <tr><td>2</td><td><a>Germany</a></td><td>1.12</td><td>0.01</td><td><div class="bar"><i class="g" style="width:116px"></i><i class="y" style="width:2px"></i><i class="r" style="width:2px"></i><b>26,774</b></div></td><td>10%</td></tr>
        <tr><td>3</td><td><a>India</a></td><td>1.57</td><td>0.05</td><td><div class="bar"><i class="g" style="width:96px"></i><i class="y" style="width:12px"></i><i class="r" style="width:12px"></i><b>18,137</b></div></td><td>7%</td></tr>
      </table>
    </section>

    <section class="panel cut">
      <h2>A/B Tests</h2>
      <table class="t-b">
        <colgroup><col class="k1"><col class="k2"><col class="k3"><col class="k4"><col class="k5"><col></colgroup>
        <tr><th>Row</th><th>AB Test</th><th>Time</th><th>Margin of Error</th><th>Beacons <s></s></th><th>%</th></tr>
      </table>
    </section>
  </div>
</main>
</body>
</html>
```
FILE: styles.css
```css
* { box-sizing: border-box; }
html { height: 1704px; overflow: hidden; }
body {
  margin: 0;
  width: 2880px;
  height: 1704px;
  overflow: hidden;
  background: #e4e8ec;
  font: 18px "Liberation Sans", sans-serif;
  color: #4f5b66;
}
.defs { display: block; }
svg { flex: none; }

/* top bar */
.topbar {
  display: flex;
  height: 46px;
  background: linear-gradient(#08244f, #2b5590);
  border-bottom: 2px solid #9fa2b2;
}
.brand { margin-right: 1px; }
.brand text { font: 600 34px "Open Sans", sans-serif; fill: #d3d6db; }
.tabs { display: flex; height: 46px; }
.tab {
  position: relative;
  display: flex;
  align-items: center;
  height: 36px;
  margin-top: 10px;
  color: #333;
  text-shadow: 0 1px #fff;
}
.tab-central { width: 132px; padding-left: 28px; gap: 7px; }
.tab-active { width: 256px; padding-left: 30px; gap: 7px; }
.tab-shape { position: absolute; left: 0; top: 0; }
.tab-icon, .tab-label, .tab-close { position: relative; }
.tab-label { white-space: nowrap; -webkit-text-stroke: .2px; }
.tab-close { margin: -6px 0 0 -4px; }
.account {
  display: flex;
  margin-left: auto;
  padding-right: 10px;
  color: #fff;
  line-height: 36px;
  letter-spacing: .15px;
  white-space: nowrap;
  -webkit-text-stroke: .4px #fff;
}
.who { margin-right: 18px; }
.about { margin-right: 19px; }
.logout { margin-right: 19px; }
.soasta text { font: 400 27px Lato, sans-serif; letter-spacing: 0; fill: #dfe6ef; stroke: none; -webkit-text-stroke: 0; }

/* toolbar */
.toolbar {
  display: flex;
  height: 44px;
  padding: 4px 14px 0 16px;
  background: linear-gradient(#e6e7e9, #dadde1);
  border-bottom: 2px solid #a3a5b3;
}
.btn {
  display: flex;
  align-items: center;
  justify-content: center;
  width: 48px;
  height: 34px;
  margin-right: 16px;
  border: 2px solid #b3b7bd;
  border-radius: 6px;
  background: linear-gradient(#fff, #e3e4e6);
}
.btn-split { width: 74px; }
.half { display: flex; justify-content: center; width: 44px; height: 30px; border-right: 2px solid #b3b7bd; }
.drop { display: flex; flex: 1; justify-content: center; }
.btn-gear { width: 64px; margin: 0 0 0 auto; gap: 7px; }

main { padding: 0 12px 0 16px; }

/* filters */
.filters {
  display: flex;
  gap: 3px;
  width: 1995px;
  height: 75px;
  margin: 17px 0 14px 427px;
  padding: 0 5px;
  border: 2px solid #c9cacb;
  border-radius: 12px;
  background: #fff;
}
.filter { flex: none; }
.filter label {
  display: block;
  height: 27px;
  padding: 4px 0 0 10px;
  line-height: 22px;
  color: #000;
  letter-spacing: -.1px;
  -webkit-text-stroke: .2px;
}
.select {
  display: flex;
  width: 180px;
  height: 37px;
  border: 2px solid #b3bfcb;
  border-radius: 8px;
  background: linear-gradient(#eef1f4, #fcfcfe 30%, #fafbfc 55%, #d9dce1);
  color: #2b3640;
  font-size: 24px;
  line-height: 32px;
  letter-spacing: -.1px;
  text-shadow: 0 2px #fff;
}
.select-date { width: 208px; margin-right: 4px; }
.select-input { width: 116px; background: #f6f8fa; color: #111; }
.select span { flex: 1; padding-left: 9px; }
.select i {
  width: 29px;
  border-left: 2px solid #b3bfcb;
  background:
    conic-gradient(from 153deg at 50% 0, #66707c 54deg, #0000 0) 50% 9px / 8px 7px no-repeat,
    conic-gradient(from -27deg at 50% 100%, #66707c 54deg, #0000 0) 50% 18px / 8px 7px no-repeat;
}
.select-input i { background-color: #eceef1; border-radius: 0 6px 6px 0; }

/* panels */
.panel {
  display: flex;
  flex-direction: column;
  min-width: 0;
  min-height: 0;
  overflow: hidden;
  border: 2px solid #c9cacb;
  border-radius: 13px;
  background: #fff;
}
.open-end { border-bottom: 0; }
.cut { border-bottom: 0; border-radius: 13px 13px 0 0; }
h2 {
  flex: none;
  height: 46px;
  margin: 0;
  padding-left: 36px;
  border-bottom: 2px solid #e2e3e4;
  color: #1b1b1b;
  font: 300 23px/36px Inter, "Liberation Sans", sans-serif;
  letter-spacing: -.25px;
}
.with-tools { display: flex; justify-content: space-between; padding-right: 11px; }
.with-tools svg { margin-top: 4px; }
.row-top { display: grid; grid-template-columns: 374px 2464px; gap: 14px; height: 320px; margin-bottom: 16px; }
.chart { display: block; }

.big { display: flex; align-items: baseline; height: 116px; padding-left: 63px; color: #666; line-height: 112px; }
.big b { font-size: 91px; font-weight: 400; letter-spacing: 0; }
.big span { margin-left: 11px; font-size: 36px; letter-spacing: -.8px; }
.stats { display: grid; grid-template-columns: 260px 1fr; margin: 0 0 0 2px; color: #666; -webkit-text-stroke: .25px; }
.stats dt, .stats dd { height: 36px; margin: 0; border-top: 2px solid #e2e4e6; line-height: 36px; }
.stats dt { padding-left: 13px; border-right: 2px solid #dfe2e5; background: #f0f4f8; }
.stats dd { padding-right: 15px; text-align: right; }
.stats em { color: #3fae1f; font-style: normal; }

/* charts */
.grid { fill: none; stroke: #d3d4d5; stroke-width: 2; }
.axis { fill: #666; -webkit-text-stroke: .25px; }
.end { text-anchor: end; }
.mid { text-anchor: middle; }
.dark { fill: #333; }
.blue { fill: #3f68a6; }
.blue2 { fill: #2b6c9f; }
.red { fill: #d10a0a; }
.mark { font-family: "Open Sans", sans-serif; fill: #dcdcdc; }
.tip { filter: drop-shadow(0 2px 2px rgba(0, 0, 0, .45)); }
.tip-text { fill: #4f6170; -webkit-text-stroke: .25px; }
.lines { fill: none; }
.lines use { stroke-width: 3; stroke-linejoin: round; }
#sess, #rate { vector-effect: non-scaling-stroke; }
.shade { stroke: #000; opacity: .13; }
.bounce { position: relative; height: 424px; margin-bottom: 16px; }
.bounce h2 { height: 44px; }
.legend {
  position: absolute;
  right: 18px;
  bottom: 0;
  display: flex;
  align-items: center;
  justify-content: space-between;
  width: 154px;
  height: 28px;
  padding: 0 6px 0 18px;
  border: 2px solid #dfe1e3;
  border-radius: 6px;
  background: #fff;
  color: #4f6170;
  -webkit-text-stroke: .25px;
}

/* bottom grid */
.row-grid {
  display: grid;
  grid-template-columns: 1426px 705px 692px;
  grid-template-rows: 538px 179px;
  gap: 15px 14.500px;
}
.geo { grid-row: span 2; }
.mapwrap { position: relative; }
.map { display: block; background: #dae4f0; }
.land path { stroke: #28500f; stroke-opacity: .8; stroke-width: 1.500px; vector-effect: non-scaling-stroke; stroke-linejoin: round; }
.land .w { fill: #fff; stroke: #d0d8e2; }
.c1 { fill: #42a900; }
.c2 { fill: #6cc400; }
.c3 { fill: #5fba00; }
.specks { fill: none; stroke: #444; stroke-width: 2; stroke-dasharray: 2 5 3 4; }
.zoomer {
  position: absolute;
  left: 14px;
  top: 14px;
  display: flex;
  flex-direction: column;
  gap: 8px;
  width: 44px;
  padding: 8px;
  border-radius: 9px;
  background: #a3adb8;
}
.zoomer button {
  width: 28px;
  height: 28px;
  padding: 0;
  border: 0;
  border-radius: 6px;
  background: #eceef0;
  color: #000;
  font: bold 25px/26px "Liberation Sans", sans-serif;
}

/* tables */
table { width: 100%; table-layout: fixed; border-collapse: separate; border-spacing: 0; }
.t-a .k1 { width: 67px; }
.t-a .k2, .t-a .k3 { width: 128px; }
.t-a .k4, .t-a .k5 { width: 126px; }
.t-b .k1 { width: 68px; }
.t-b .k2, .t-b .k3, .t-b .k4, .t-b .k5 { width: 124px; }
th, td {
  height: 38px;
  overflow: hidden;
  border-right: 2px solid #e0e2e4;
  border-bottom: 2px solid #e0e2e4;
  line-height: 36px;
  white-space: nowrap;
  -webkit-text-stroke: .25px;
}
th:last-child, td:last-child { border-right: 0; }
th { padding: 0 0 0 13px; background: #f1f4f8; font-weight: 400; text-align: left; }
td { padding: 0 15px 0 0; text-align: right; }
td:nth-child(2), .lab { padding: 0 0 0 13px; text-align: left; }
td:nth-child(5) { padding: 0 0 0 2px; }
.t-b td:nth-child(5) { padding-left: 4px; }
th s { float: right; width: 0; margin: 12px 5px 0 0; border: 6.500px solid transparent; border-top: 12px solid #4f5b66; border-bottom: 0; }
a { color: #2e6ff2; }
.hl { background: #ffe09a; }
.bar { position: relative; display: flex; height: 30px; margin-bottom: 2px; -webkit-text-stroke: 0; }
.bar i { background: linear-gradient(#92e08c, #489944); }
.bar .y { background: linear-gradient(#f4e98c, #dccb1c); }
.bar .r { background: linear-gradient(#e08d8d, #cf3a3a); }
.bar b { position: absolute; left: 0; width: 118px; color: #fff; line-height: 31px; text-align: center; text-shadow: 0 1px 3px rgba(0, 40, 0, .7); }
```
